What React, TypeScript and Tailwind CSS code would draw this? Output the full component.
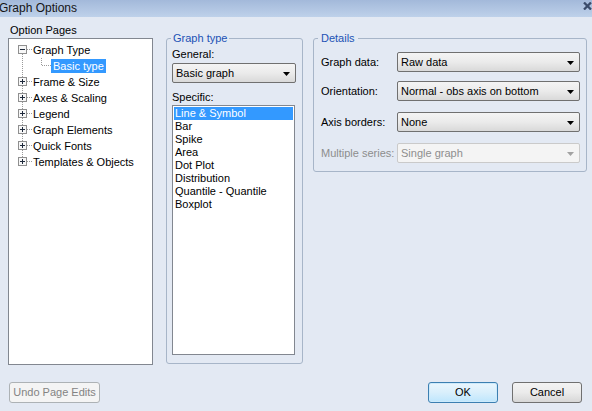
import clsx from "clsx"

const font = "font-['Liberation_Sans',Arial,sans-serif]"

const Dropdown = ({ value, className, disabled }: { value: string; className?: string; disabled?: boolean }) => (
    <div
        className={clsx(
            "flex items-center h-[20px] rounded-[2px] border pl-[3px] pr-[5px] leading-[13px]",
            disabled
                ? "border-[#cacaca] bg-[#f4f4f4] text-[#8e8e8e]"
                : "border-[#707070] bg-linear-to-b from-[#f4f4f4] via-[#ebebeb] to-[#d9d9d9] text-black",
            className
        )}
    >
        <span className="flex-1 truncate">{value}</span>
        <svg width="7" height="4" viewBox="0 0 7 4" className="translate-y-[1px] shrink-0">
            <path d="M0 0H7L3.5 4Z" fill={disabled ? "#a2a2a2" : "#000"} />
        </svg>
    </div>
)

const Button = ({ label, className }: { label: string; className?: string }) => (
    <div className={clsx("h-[21px] flex items-center justify-center rounded-[3px] border leading-[13px]", className)}>
        {label}
    </div>
)

type Pos = "first" | "mid" | "last"

// expander box + dotted tree lines
const Expander = ({ pos, open }: { pos: Pos; open?: boolean }) => (
    <svg width="20" height="16" className="shrink-0" shapeRendering="crispEdges">
        {pos !== "first" && <line x1="9.5" y1="0" x2="9.5" y2="3" stroke="#9a9a9a" strokeDasharray="1 1" />}
        {pos !== "last" && <line x1="9.5" y1="12" x2="9.5" y2="16" stroke="#9a9a9a" strokeDasharray="1 1" />}
        <line x1="14" y1="7.5" x2="20" y2="7.5" stroke="#9a9a9a" strokeDasharray="1 1" />
        <rect x="5.5" y="3.5" width="8" height="8" fill="#f7f7f7" stroke="#8f8f8f" />
        <line x1="7" y1="7.5" x2="12" y2="7.5" stroke="#1f2a3c" />
        {!open && <line x1="9.5" y1="5" x2="9.5" y2="10" stroke="#1f2a3c" />}
    </svg>
)

const ChildLines = () => (
    <svg width="38" height="16" className="shrink-0" shapeRendering="crispEdges">
        <line x1="9.5" y1="0" x2="9.5" y2="16" stroke="#9a9a9a" strokeDasharray="1 1" />
        <line x1="28.5" y1="0" x2="28.5" y2="8" stroke="#9a9a9a" strokeDasharray="1 1" />
        <line x1="29" y1="7.5" x2="38" y2="7.5" stroke="#9a9a9a" strokeDasharray="1 1" />
    </svg>
)

const pages: { label: string; pos: Pos }[] = [
    { label: "Frame & Size", pos: "mid" },
    { label: "Axes & Scaling", pos: "mid" },
    { label: "Legend", pos: "mid" },
    { label: "Graph Elements", pos: "mid" },
    { label: "Quick Fonts", pos: "mid" },
    { label: "Templates & Objects", pos: "last" },
]

const specific = ["Line & Symbol", "Bar", "Spike", "Area", "Dot Plot", "Distribution", "Quantile - Quantile", "Boxplot"]

const details = [
    { label: "Graph data:", value: "Raw data", mt: "mt-[7px]" },
    { label: "Orientation:", value: "Normal - obs axis on bottom", mt: "mt-[9px]" },
    { label: "Axis borders:", value: "None", mt: "mt-[11px]" },
]

export default function App() {
    return (
        <div className={clsx("w-[592px] h-[411px] bg-[#e3e9f3] flex flex-col text-[11px] text-black overflow-hidden", font)}>
            {/* title bar */}
            <div className="h-[17px] shrink-0 flex items-start justify-between bg-linear-to-b from-[#a3b9da] to-[#bed1ea]">
                <span className="text-[12px] leading-[16px] text-[#151515] -ml-px">Graph Options</span>
                <svg width="9" height="8" viewBox="0 0 9 8" className="mt-[2px]">
                    <path d="M1 0.5L8 7.5M8 0.5L1 7.5" stroke="#3b4c6b" strokeWidth="2.3" />
                </svg>
            </div>

            {/* body */}
            <div className="flex items-start pl-[8px] pt-[7px]">
                {/* option pages */}
                <div className="w-[145px] flex flex-col">
                    <div className="h-[14px] leading-[13px] pl-[2px]">Option Pages</div>
                    <div className="h-[327px] bg-white border border-[#828790] pt-[3px] pl-[4px] flex flex-col">
                        <div className="flex items-center h-[16px]">
                            <Expander pos="first" open />
                            <span className="leading-[13px]">Graph Type</span>
                        </div>
                        <div className="flex items-center h-[16px]">
                            <ChildLines />
                            <span className="h-[14px] leading-[14px] px-[2px] bg-[#3399ff] text-white">Basic type</span>
                        </div>
                        {pages.map((p) => (
                            <div key={p.label} className="flex items-center h-[16px]">
                                <Expander pos={p.pos} />
                                <span className="leading-[13px]">{p.label}</span>
                            </div>
                        ))}
                    </div>
                </div>

                {/* graph type */}
                <fieldset className="ml-[13px] mt-[8px] w-[137px] h-[332px] border border-[#a7b5c8] rounded-[3px]">
                    <legend className="ml-[4px] px-[2px] leading-[13px] text-[#2152b5]">Graph type</legend>
                    <div className="flex flex-col px-[5px] pt-[3px]">
                        <div className="h-[13px] leading-[13px]">General:</div>
                        <Dropdown value="Basic graph" className="mt-[2px] w-[124px]" />
                        <div className="mt-[8px] h-[13px] leading-[13px]">Specific:</div>
                        <div className="mt-[1px] w-[123px] h-[250px] bg-white border border-[#828790] p-[1px] flex flex-col">
                            {specific.map((s, i) => (
                                <div
                                    key={s}
                                    className={clsx("h-[13px] leading-[13px] pl-[1px]", i === 0 && "bg-[#3399ff] text-white")}
                                >
                                    {s}
                                </div>
                            ))}
                        </div>
                    </div>
                </fieldset>

                {/* details */}
                <fieldset className="ml-[10px] mt-[8px] w-[274px] border border-[#a7b5c8] rounded-[3px]">
                    <legend className="ml-[4px] px-[3px] leading-[13px] text-[#2152b5]">Details</legend>
                    <div className="flex flex-col pl-[7px] pb-[8px]">
                        {details.map((d) => (
                            <div key={d.label} className={clsx("flex items-center h-[20px]", d.mt)}>
                                <span className="w-[76px] leading-[13px]">{d.label}</span>
                                <Dropdown value={d.value} className="w-[183px]" />
                            </div>
                        ))}
                        <div className="flex items-center h-[20px] mt-[11px]">
                            <span className="w-[76px] leading-[13px] text-[#8d8d8d]">Multiple series:</span>
                            <Dropdown value="Single graph" className="w-[183px]" disabled />
                        </div>
                    </div>
                </fieldset>
            </div>

            {/* buttons */}
            <div className="flex items-center mt-[17px] pl-[9px] pr-[10px]">
                <Button label="Undo Page Edits" className="w-[91px] border-[#adb2b5] bg-[#f4f4f4] text-[#838383]" />
                <Button
                    label="OK"
                    className="ml-auto w-[70px] border-[#3c7fb1] bg-linear-to-b from-[#eaf6fd] via-[#d9effc] to-[#bee6fd] shadow-[inset_0_0_0_1px_#cdeafb]"
                />
                <Button
                    label="Cancel"
                    className="ml-[14px] w-[70px] border-[#707070] bg-linear-to-b from-[#f3f3f3] via-[#ebebeb] to-[#d7d7d7]"
                />
            </div>
        </div>
    )
}
